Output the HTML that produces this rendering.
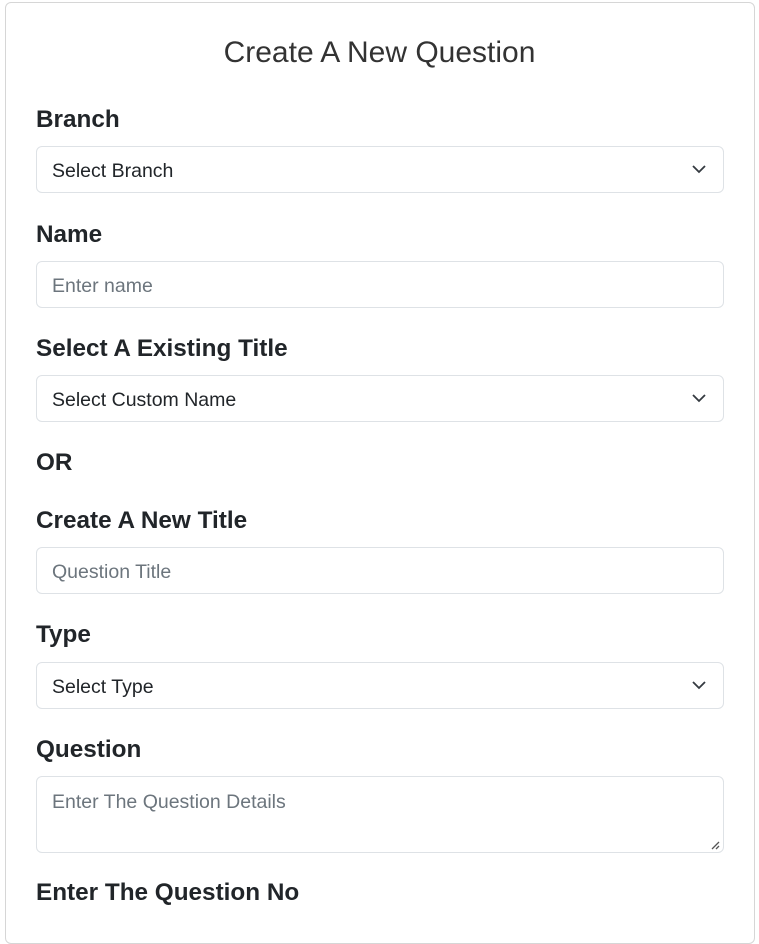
<!DOCTYPE html>
<html><head><meta charset="utf-8"><style>
html,body{margin:0;height:910px;overflow:hidden;}
body{background:#fff;font-family:"Liberation Sans",sans-serif;color:#212529;}
.card{position:absolute;left:5px;top:2px;width:748px;height:940px;border:1px solid #d6d6d6;border-radius:6px;}
.t{position:absolute;left:0;width:759px;top:36px;text-align:center;font-size:30px;color:#333;}
.l{position:absolute;left:36px;font-weight:bold;font-size:24.3px;line-height:30px;}
.f{position:absolute;left:36px;width:686px;height:45px;border:1px solid #dee2e6;border-radius:6px;box-sizing:content-box;}
.f span{position:absolute;left:15px;top:14px;font-size:19.5px;line-height:20px;}
.ph{color:#6c757d;}
.f svg{position:absolute;right:17px;top:17px;}
</style></head><body>
<div class="card"></div>
<div class="t">Create A New Question</div>
<div class="l" style="top:105px">Branch</div>
<div class="f" style="top:146px"><span>Select Branch</span><svg width="14" height="10" viewBox="0 0 14 10"><path d="M1 2l6 6 6-6" fill="none" stroke="#343a40" stroke-width="1.8"/></svg></div>
<div class="l" style="top:220px">Name</div>
<div class="f" style="top:261px"><span class="ph">Enter name</span></div>
<div class="l" style="top:334px">Select A Existing Title</div>
<div class="f" style="top:375px"><span>Select Custom Name</span><svg width="14" height="10" viewBox="0 0 14 10"><path d="M1 2l6 6 6-6" fill="none" stroke="#343a40" stroke-width="1.8"/></svg></div>
<div class="l" style="top:448px">OR</div>
<div class="l" style="top:506px">Create A New Title</div>
<div class="f" style="top:547px"><span class="ph">Question Title</span></div>
<div class="l" style="top:620px">Type</div>
<div class="f" style="top:662px"><span>Select Type</span><svg width="14" height="10" viewBox="0 0 14 10"><path d="M1 2l6 6 6-6" fill="none" stroke="#343a40" stroke-width="1.8"/></svg></div>
<div class="l" style="top:735px">Question</div>
<div class="f" style="top:776px;height:75px"><span class="ph" style="top:15px">Enter The Question Details</span><svg style="right:3px;top:64px" width="9" height="9" viewBox="0 0 9 9"><path d="M1 8L8 1M5 8L8 5" stroke="#555" stroke-width="1.3"/></svg></div>
<div class="l" style="top:878px">Enter The Question No</div>
</body></html>
